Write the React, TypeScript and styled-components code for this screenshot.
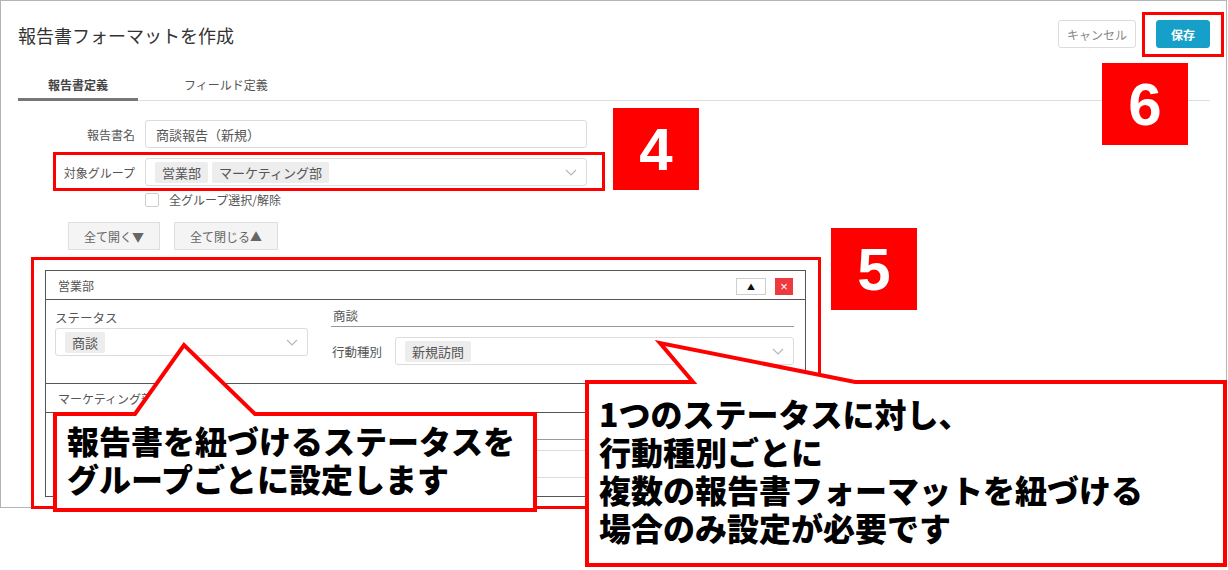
import React from 'react';
import styled, { createGlobalStyle } from 'styled-components';

const GlobalStyle = createGlobalStyle`
  body {
    margin: 0;
    background: #fff;
    font-family: 'Noto Sans CJK JP', 'Noto Sans', sans-serif;
  }
  * { box-sizing: border-box; }
`;

const Page = styled.div`
    position: relative;
    width: 1228px;
    height: 570px;
    overflow: hidden;
`;

const Frame = styled.div`
    width: 1227px;
    height: 508px;
    border: 1px solid #b4b4b4;
    overflow: hidden;
    color: #555;
`;

const Header = styled.div`
    display: flex;
    align-items: flex-start;
    justify-content: space-between;
    height: 65px;
    padding: 19px 16px 0 17px;
`;

const Title = styled.h1`
    margin: 0;
    font-size: 18px;
    font-weight: 400;
    line-height: 30px;
    color: #333;
`;

const HeaderButtons = styled.div`
    display: flex;
    gap: 20px;
`;

const HeaderButton = styled.button<{ $primary?: boolean }>`
    height: 28px;
    padding: 0 ${p => (p.$primary ? '14px' : '8px')};
    border: 1px solid ${p => (p.$primary ? '#169fc9' : '#dcdcdc')};
    border-radius: 3px;
    background: ${p => (p.$primary ? '#169fc9' : '#fff')};
    color: ${p => (p.$primary ? '#fff' : '#888')};
    font-family: inherit;
    font-size: 12px;
    font-weight: ${p => (p.$primary ? 700 : 400)};
`;

const TabBar = styled.div`
    display: flex;
    height: 35px;
    margin: 0 16px 0 17px;
    border-bottom: 1px solid #ddd;
`;

const Tab = styled.div<{ $active?: boolean }>`
    display: flex;
    align-items: center;
    justify-content: center;
    height: 35px;
    margin-bottom: -1px;
    padding: 4px ${p => (p.$active ? '0' : '46px')} 0;
    width: ${p => (p.$active ? '120px' : 'auto')};
    border-bottom: 3px solid ${p => (p.$active ? '#777' : 'transparent')};
    font-size: 12px;
    font-weight: ${p => (p.$active ? 700 : 400)};
    color: ${p => (p.$active ? '#444' : '#555')};
`;

const Form = styled.div`
    margin-top: 19px;
`;

const FormRow = styled.div`
    display: flex;
    align-items: center;
    gap: 10px;
    & + & {
        margin-top: 10px;
    }
`;

const FormLabel = styled.div`
    width: 134px;
    text-align: right;
    font-size: 12px;
    color: #555;
`;

const TextInput = styled.div`
    display: flex;
    align-items: center;
    width: 442px;
    height: 28px;
    padding-left: 10px;
    border: 1px solid #dcdcdc;
    border-radius: 3px;
    font-size: 13px;
    color: #555;
`;

const Select = styled.div<{ $width?: number; $inset: number; $offset?: number }>`
    display: flex;
    align-items: center;
    gap: 4px;
    ${p => (p.$width ? `width: ${p.$width}px;` : 'flex: 1;')}
    height: 28px;
    margin-top: ${p => p.$offset ?? 0}px;
    padding-left: ${p => p.$inset}px;
    padding-right: 9px;
    border: 1px solid #dcdcdc;
    border-radius: 3px;
    background: #fff;
`;

const Chip = styled.span`
    display: inline-flex;
    align-items: center;
    height: 21px;
    padding: 0 7px;
    border-radius: 2px;
    background: #ededed;
    font-size: 13px;
    color: #555;
`;

const ChevronBox = styled.span`
    display: flex;
    margin-left: auto;
`;

const CheckRow = styled.label`
    display: flex;
    align-items: center;
    margin-top: 7px;
    padding-left: 144px;
    font-size: 12px;
    line-height: 14px;
    color: #555;
`;

const CheckBox = styled.span`
    width: 14px;
    height: 14px;
    margin-right: 10px;
    border: 1px solid #cfcfcf;
    border-radius: 2px;
    background: #fff;
`;

const ToggleRow = styled.div`
    display: flex;
    gap: 14px;
    margin-top: 15px;
    padding-left: 67px;
`;

const ToggleButton = styled.button`
    height: 28px;
    padding: 0 15px;
    border: 1px solid #dedede;
    background: #f4f4f4;
    color: #666;
    font-family: inherit;
    font-size: 12px;
`;

const GroupList = styled.div`
    width: 761px;
    margin: 20px 0 0 44px;
    border: 1px solid #555;
    border-bottom: none;
`;

const GroupHeader = styled.div`
    display: flex;
    align-items: center;
    height: 29px;
    padding: 0 12px;
    border-bottom: 1px solid #555;
    font-size: 12px;
    color: #555;
`;

const GroupTools = styled.div`
    display: flex;
    gap: 9px;
    margin-left: auto;
    padding-top: 3px;
`;

const UpButton = styled.span`
    display: flex;
    align-items: center;
    justify-content: center;
    width: 30px;
    height: 17px;
    border: 1px solid #cfcfcf;
    background: #fff;
    font-size: 8px;
    color: #111;
`;

const CloseButton = styled.span`
    display: flex;
    align-items: center;
    justify-content: center;
    width: 18px;
    height: 17px;
    background: #ee3a3f;
    font-family: 'Liberation Sans', sans-serif;
    font-size: 13px;
    color: #fff;
`;

const GroupBody = styled.div`
    display: flex;
    gap: 23px;
    height: 84px;
    padding: 0 11px 0 9px;
    border-bottom: 1px solid #555;
`;

const StatusCol = styled.div`
    width: 253px;
    padding-top: 9px;
`;

const ActionCol = styled.div`
    flex: 1;
    padding-top: 7px;
`;

const FieldLabel = styled.div`
    font-size: 12.5px;
    line-height: 18px;
    color: #555;
`;

const SectionTitle = styled.div`
    padding: 0 0 1px 2px;
    border-bottom: 1px solid #999;
    font-size: 12.5px;
    line-height: 18px;
    color: #555;
`;

const ActionRow = styled.div`
    display: flex;
    align-items: center;
    margin-top: 10px;
`;

const ActionLabel = styled.div`
    width: 64px;
    padding-left: 1px;
    font-size: 12.5px;
    color: #555;
`;

/* annotations drawn over the screenshot */

const MarkBox = styled.div<{ $x: number; $y: number; $w: number; $h: number }>`
    position: absolute;
    left: ${p => p.$x}px;
    top: ${p => p.$y}px;
    width: ${p => p.$w}px;
    height: ${p => p.$h}px;
    border: 3px solid #ff0000;
`;

const Badge = styled.div<{ $x: number; $y: number }>`
    position: absolute;
    left: ${p => p.$x}px;
    top: ${p => p.$y}px;
    display: flex;
    align-items: center;
    justify-content: center;
    width: 86px;
    height: 82px;
    background: #ff0000;
    color: #fff;
    font-family: 'Liberation Sans', Arial, sans-serif;
    font-size: 60px;
    font-weight: 700;
`;

const CalloutWrap = styled.div<{ $x: number; $y: number; $w: number; $h: number }>`
    position: absolute;
    left: ${p => p.$x}px;
    top: ${p => p.$y}px;
    width: ${p => p.$w}px;
    height: ${p => p.$h}px;
`;

const CalloutShape = styled.svg`
    position: absolute;
    inset: 0;
    overflow: visible;
`;

const CalloutText = styled.div<{ $top: number; $left: number }>`
    position: relative;
    padding: ${p => p.$top}px 0 0 ${p => p.$left}px;
    white-space: pre-line;
    font-size: 32px;
    font-weight: 900;
    line-height: 38px;
    color: #000;
`;

const Chevron = () => (
    <ChevronBox>
        <svg width="12" height="7" viewBox="0 0 12 7">
            <polyline points="1,1 6,6 11,1" fill="none" stroke="#b8b8b8" strokeWidth="1.2" />
        </svg>
    </ChevronBox>
);

type CalloutProps = {
    box: { x: number; y: number; w: number; h: number };
    tip: { x: number; y: number };
    legs: [number, number];
    textTop: number;
    textLeft: number;
    text: string;
};

const Callout = ({ box, tip, legs, textTop, textLeft, text }: CalloutProps) => {
    const top = tip.y;
    const h = box.y + box.h - top;
    const by = box.y - top + 2;
    const x0 = 2;
    const x1 = box.w - 2;
    const y1 = h - 2;
    const pts = [
        [x0, by], [legs[0] - box.x, by], [tip.x - box.x, 0], [legs[1] - box.x, by],
        [x1, by], [x1, y1], [x0, y1]
    ].map(p => p.join(',')).join(' ');
    return (
        <CalloutWrap $x={box.x} $y={top} $w={box.w} $h={h}>
            <CalloutShape width={box.w} height={h}>
                <polygon points={pts} fill="#fff" stroke="#ff0000" strokeWidth="4" strokeLinejoin="miter" />
            </CalloutShape>
            <CalloutText $top={box.y - top + textTop} $left={textLeft}>{text}</CalloutText>
        </CalloutWrap>
    );
};

const groups = [
    { name: '営業部', status: '商談', section: '商談', action: '新規訪問' },
    { name: 'マーケティング部', status: '商談', section: '商談', action: '新規訪問' },
];

export default function App() {
    return (
        <Page>
            <GlobalStyle />
            <Frame>
                <Header>
                    <Title>報告書フォーマットを作成</Title>
                    <HeaderButtons>
                        <HeaderButton>キャンセル</HeaderButton>
                        <HeaderButton $primary>保存</HeaderButton>
                    </HeaderButtons>
                </Header>
                <TabBar>
                    <Tab $active>報告書定義</Tab>
                    <Tab>フィールド定義</Tab>
                </TabBar>
                <Form>
                    <FormRow>
                        <FormLabel>報告書名</FormLabel>
                        <TextInput>商談報告（新規）</TextInput>
                    </FormRow>
                    <FormRow>
                        <FormLabel>対象グループ</FormLabel>
                        <Select $width={442} $inset={9}>
                            <Chip>営業部</Chip>
                            <Chip>マーケティング部</Chip>
                            <Chevron />
                        </Select>
                    </FormRow>
                    <CheckRow>
                        <CheckBox />
                        全グループ選択/解除
                    </CheckRow>
                    <ToggleRow>
                        <ToggleButton>全て開く▼</ToggleButton>
                        <ToggleButton>全て閉じる▲</ToggleButton>
                    </ToggleRow>
                </Form>
                <GroupList>
                    {groups.map((g, idx) => (
                        <React.Fragment key={`group-${idx}`}>
                            <GroupHeader>
                                {g.name}
                                {idx === 0 && (
                                    <GroupTools>
                                        <UpButton>▲</UpButton>
                                        <CloseButton>×</CloseButton>
                                    </GroupTools>
                                )}
                            </GroupHeader>
                            <GroupBody>
                                <StatusCol>
                                    <FieldLabel>ステータス</FieldLabel>
                                    <Select $inset={9} $offset={1}>
                                        <Chip>{g.status}</Chip>
                                        <Chevron />
                                    </Select>
                                </StatusCol>
                                <ActionCol>
                                    <SectionTitle>{g.section}</SectionTitle>
                                    <ActionRow>
                                        <ActionLabel>行動種別</ActionLabel>
                                        <Select $inset={9}>
                                            <Chip>{g.action}</Chip>
                                            <Chevron />
                                        </Select>
                                    </ActionRow>
                                </ActionCol>
                            </GroupBody>
                        </React.Fragment>
                    ))}
                </GroupList>
            </Frame>

            <MarkBox $x={1142} $y={12} $w={82} $h={45} />
            <Badge $x={1102} $y={63}>6</Badge>
            <MarkBox $x={53} $y={152} $w={552} $h={39} />
            <Badge $x={613} $y={108}>4</Badge>
            <MarkBox $x={31} $y={257} $w={790} $h={252} />
            <Badge $x={831} $y={228}>5</Badge>

            <Callout
                box={{ x: 53, y: 412, w: 484, h: 100 }}
                tip={{ x: 184, y: 345 }}
                legs={[135, 255]}
                textTop={9}
                textLeft={14}
                text={'報告書を紐づけるステータスを\nグループごとに設定します'}
            />
            <Callout
                box={{ x: 585, y: 380, w: 642, h: 187 }}
                tip={{ x: 660, y: 343 }}
                legs={[693, 855]}
                textTop={14}
                textLeft={14}
                text={'1つのステータスに対し、\n行動種別ごとに\n複数の報告書フォーマットを紐づける\n場合のみ設定が必要です'}
            />
        </Page>
    );
}
